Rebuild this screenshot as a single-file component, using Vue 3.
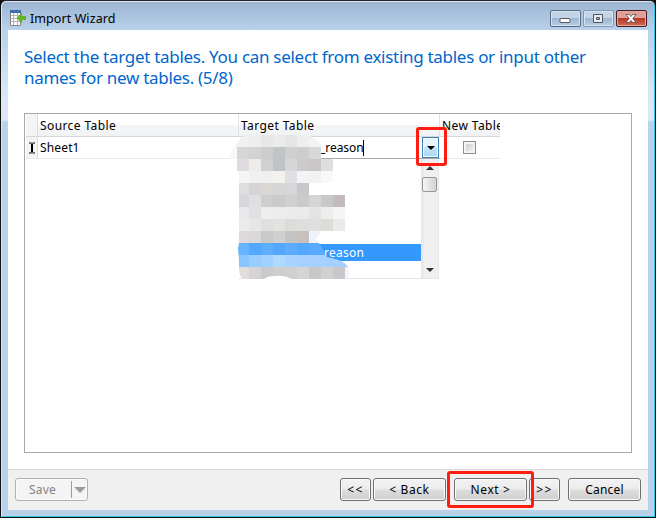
<script setup>
const cells = [
  ['#f1f1f1', '#eeeeee', '#e7e7e7', '#ebebeb', '#e5e5e6', '#eeeeee', '#f3f3f3'],
  ['#d8d5d7', '#d3d3d3', '#cdcdcc', '#c1c5c7', '#cfcfcf', '#d0cccd', '#d8d8d8'],
  ['#e0dbdf', '#efecea', '#d0d0d0', '#c0c3c6', '#d6d6d8', '#cccacb', '#cac7c8', '#dedde0'],
  ['#f5f5f7', '#f0eff1', '#f0eff0', '#f3f1ee', '#e0dfe4', '#f4f4f4', '#f2f2f2', '#f8f8f8'],
  ['#dedede', '#d6d4d6', '#d9d7d2', '#d4d6d8', '#d8d6d8', '#c6c8ca'],
  ['#d8d6da', '#e0dee0', '#cecece', '#cccaca', '#d0d0ce', '#cbc9c9', '#d6d4d6', '#c8c8c8', '#c5bac0'],
  ['#e8e8ea', '#e3e0e3', '#eeeeee', '#ececec', '#ebebeb', '#ebebeb', '#e3e3e3', '#ededeb', '#f5f5f5'],
  ['#ebebeb', '#e6e6e8', '#dfdfdd', '#e2e2e0', '#dcdcda', '#dededc', '#dfdfdf', '#dcdcd8', '#e8eaec'],
  ['#dbd9da', '#dad8d8', '#c9c9c7', '#d2d0ce', '#c4c4c4', '#c8c0bd', '#edf3f9'],
  ['#66b3ff', '#52a8ff', '#5eaeff', '#55a6ff', '#5eacff', '#55a8ff', '#5aaaff', '#5aaaff'],
  ['#88c4ff', '#99ccff', '#a0d0ff', '#b0d9ff', '#a8d4ff', '#a5d0ff', '#a5d0ff', '#a5d0ff', '#a5d0ff', '#a5d0ff'],
  ['#e0dddb', '#d5d3d3', '#c9cac9', '#cfcdcc', '#cfcfd0', '#d6d4d6', '#c9c7c8', '#d2d0d2', '#c9c7c9', '#f3f5f8'],
]
</script>

<template>
  <div class="window">
    <header class="titlebar">
      <svg class="app-icon" width="17" height="17" viewBox="0 0 17 17">
        <path d="M.5 1.500h10v14H.5z" fill="#fff" stroke="#858585" />
        <path d="M1 5.500h9M1 8.500h9M1 11.500h9M3.500 3v12M7.500 3v12" stroke="#b2b2b2" />
        <path d="M0 0h11v3H0z" fill="#3f6fae" />
        <path d="M6.500 8L12 2.500V6h4v4h-4v3.500z" fill="#62b51e" />
      </svg>
      <span class="title">Import Wizard</span>
      <div class="controls">
        <span class="ctl"><svg width="30" height="16"><rect x="10" y="8.500" width="10" height="4" rx="1" fill="#fff" stroke="#50565e" /></svg></span>
        <span class="ctl dim"><svg width="30" height="16"><path d="M10.500 4.500h9v8h-9zM13.500 7.500v2h3v-2z" fill="#e6edf5" fill-rule="evenodd" stroke="#50565e" /></svg></span>
        <span class="ctl close"><svg width="30" height="16"><path d="M10 4.500h3.200l1.800 2 1.800-2H20L16.800 8.500l3.200 4h-3.200l-1.800-2-1.800 2H10l3.200-4z" fill="#fff" stroke="#5c4550" stroke-width=".8" /></svg></span>
      </div>
    </header>
    <main class="client">
      <section class="page">
        <h1><span class="l1">Select the target tables. You can select from existing tables or input other</span><br><span class="l2">names for new tables. (5/8)</span></h1>
        <div class="grid">
          <div class="row head">
            <span class="mark"></span><span class="src">Source Table</span><span class="tgt">Target Table</span><span class="new">New Table</span>
          </div>
          <div class="row body">
            <span class="mark"><svg width="8" height="12"><path d="M1 1h2.500M4.500 1H7M1 11h2.500M4.500 11H7" stroke="#000" /><path d="M4 1.500v9" stroke="#000" stroke-width="2" /></svg></span>
            <span class="src sheet">Sheet1</span>
            <span class="tgt editor"><span class="value">_reason</span><i class="caret"></i><span class="combo"><svg width="8" height="4"><path d="M0 0h8L4 4z" /></svg></span></span>
            <span class="new check"><i class="box"></i></span>
          </div>
        </div>
      </section>
      <footer class="footer">
        <button class="btn save"><span>Save</span><i></i><svg width="12" height="6"><path d="M0 0h12L6 6z" fill="#9c9c9c" /></svg></button>
        <button class="btn tiny first">&lt;&lt;</button>
        <button class="btn back">&lt; Back</button>
        <button class="btn next">Next &gt;</button>
        <button class="btn tiny">&gt;&gt;</button>
        <button class="btn cancel">Cancel</button>
      </footer>
    </main>

    <div class="dropdown">
      <div class="list"><div class="selected">reason</div></div>
      <div class="scroll">
        <svg width="8" height="4"><path d="M0 4L4 0l4 4z" fill="#333" /></svg>
        <i class="thumb"></i>
        <svg class="down" width="8" height="4"><path d="M0 0h8L4 4z" fill="#333" /></svg>
      </div>
    </div>

    <svg class="mosaic" width="122" height="147" viewBox="229 134 122 147">
      <defs>
        <clipPath id="smudge">
          <path d="M237 150V144Q239 136 248 135H306Q320 138 322 148V157Q330 156 333 161V180Q332 183 325 183H309V195H345V231H321L316 240Q323 247 326 257Q346 260 349 269Q351 276 347 279H291Q285 275 274 276Q267 276 264 279H243Q239 277 239 267V261L238 248L239 243V171H237Z" />
        </clipPath>
      </defs>
      <path d="M240 140Q230 149 230 159H239Z" fill="#f7f7f7" />
      <path d="M262 279Q268 274 278 275Q288 275 293 279z" fill="#fff" />
      <g clip-path="url(#smudge)" shape-rendering="crispEdges">
        <template v-for="(line, r) in cells" :key="r">
          <rect v-for="(color, c) in line" :key="c" :x="237 + c * 12" :y="135 + r * 12" width="12" height="12" :fill="color" />
        </template>
      </g>
    </svg>
    <div class="callout arrow-callout"></div>
    <div class="callout next-callout"></div>
  </div>
</template>

<style>
body { overflow: hidden; background: #111; }
</style>

<style scoped>
* { box-sizing: border-box; }
.window {
  position: relative; width: 656px; height: 518px; padding: 1px 7px 7px;
  border: 1px solid #111; border-top-color: #25272c; border-radius: 6px 6px 0 0;
  background: linear-gradient(#9ab4d2 0, #b9d1ea 29px, #d9e6f4 92px, #dce8f5 119px, #b9d1ea 121px);
  box-shadow: inset 1px 0 #dce9f7, inset -1px -1px #30c8e6, inset 0 1px #dce7f3;
  font: 12px/16px "Noto Sans", "Open Sans", sans-serif; color: #000;
}
.titlebar { display: flex; height: 28px; padding-left: 2px; }
.app-icon { margin-top: 8px; }
.title { margin: 9px 0 0 3px; font-size: 12.500px; letter-spacing: .08px; }
.controls { display: flex; gap: 2px; margin: 8px 1px 0 auto; }
.ctl { width: 31px; height: 17px; border: 1px solid #566b84; border-radius: 2px; background: linear-gradient(#c3d4e7 0 45%, #9fb7d1 50%, #b5cde5); box-shadow: inset 0 0 0 1px #d5e2ef; }
.ctl svg { display: block; margin: -1px 0 0 -1px; }
.dim { border-color: #8297b2; }
.close { border-color: #481923; background: linear-gradient(#dda197 0 45%, #b93826 50%, #cc6b50); box-shadow: inset 0 0 0 1px #e2aaa0; }
.client { height: 480px; display: flex; flex-direction: column; background: #fff; }
.page { height: 439px; padding: 16px 16px 0; }
h1 { margin: 0; height: 67px; font-size: 17px; line-height: 21px; font-weight: 400; letter-spacing: -.29px; color: #0066cc; white-space: nowrap; }
.grid { width: 608px; height: 340px; border: 1px solid #a6a8ab; padding-left: 1px; }
.row { display: flex; width: 474px; height: 22px; overflow: hidden; }
.row > span { flex: none; height: 22px; border-bottom: 1px solid #e7e9eb; line-height: 22px; padding-left: 2px; overflow: hidden; white-space: nowrap; }
.row > .mark { width: 12px; border-right: 1px solid #d9dcdf; background: #f3f4f6; padding: 5px 0 0 2px; line-height: 0; }
.src { width: 201px; }
.tgt { width: 201px; }
.new { width: 60px; }
.head { height: 23px; letter-spacing: .4px; background: linear-gradient(#fff 0 45%, #f4f5f6 50%, #f0f2f4); }
.head > span { height: 23px; line-height: 24px; border-bottom-color: #d5d8db; }
.head > .src, .head > .tgt { border-right: 1px solid #dfe2e5; }
.sheet { letter-spacing: .15px; }
.row > .editor { display: flex; padding-left: 81px; border-bottom-color: #aaa; }
.value { letter-spacing: -.05px; }
.caret { width: 1px; height: 16px; margin: 3px 0 0 -1px; background: #000; }
.combo { width: 17px; height: 21px; margin: 0 1px 0 auto; border: 1px solid #3c7fb1; background: linear-gradient(#e5f4fc 0 48%, #c2e5f8 50%, #a8d8f2); box-shadow: inset 0 0 0 1px #eefaff; display: flex; align-items: center; justify-content: center; }
.row > .check { padding: 4px 0 0 23px; }
.box { display: block; width: 13px; height: 13px; border: 1px solid #8e8f8f; background: linear-gradient(135deg, #c6c9ce, #f4f4f4); box-shadow: inset 0 0 0 2px #f4f4f4; }
.footer { display: flex; height: 41px; padding: 8px 7px 0; border-top: 1px solid #d8d8d8; background: #f0f0f0; }
.btn { flex: none; height: 23px; padding: 0; border: 1px solid #707070; border-radius: 3px; background: linear-gradient(#f3f3f3, #ebebeb 48%, #dddddd 52%, #cfcfcf); box-shadow: inset 0 0 0 1px #fafafa; font: inherit; letter-spacing: .2px; line-height: 20px; color: #000; }
.save { width: 73px; display: flex; align-items: center; padding-left: 13px; border-color: #adb2b5; background: #f4f4f4; color: #838383; }
.save span { width: 42px; text-align: left; }
.save i { width: 1px; height: 17px; margin-right: 2px; background: #9c9c9c; }
.tiny { width: 31px; letter-spacing: 1.500px; }
.first { margin-left: 252px; }
.back { width: 73px; margin-left: 2px; letter-spacing: .6px; }
.next { width: 73px; margin: 0 2px 0 8px; letter-spacing: .6px; }
.cancel { width: 73px; margin-left: 8px; }
.dropdown { position: absolute; left: 238px; top: 158px; width: 200px; height: 120px; display: flex; border: solid #e3e6ec; border-width: 0 1px 1px 0; }
.list { width: 182px; padding-top: 85px; background: #fff; }
.selected { height: 17px; padding-left: 85px; background: #3399ff; color: #fff; letter-spacing: .25px; line-height: 18px; }
.scroll { width: 17px; display: flex; flex-direction: column; align-items: center; padding: 7px 0 6px; background: linear-gradient(90deg, #e4e4e4, #f0f0f0 4px); }
.thumb { width: 15px; height: 15px; margin-top: 7px; border: 1px solid #979797; border-radius: 2px; background: linear-gradient(90deg, #f5f5f5, #e4e4e4 48%, #d4d4d6); }
.down { margin-top: auto; }
.mosaic { position: absolute; left: 228px; top: 133px; }
.callout { position: absolute; border: 3px solid #ff1d12; border-radius: 3px; }
.arrow-callout { left: 415px; top: 126px; width: 31px; height: 39px; }
.next-callout { left: 446px; top: 470px; width: 87px; height: 37px; }
</style>
